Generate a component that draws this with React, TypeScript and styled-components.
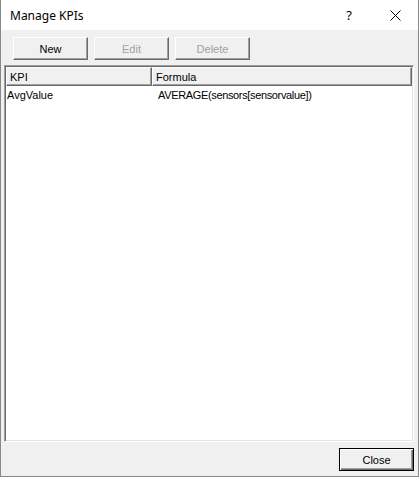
import React from "react";
import styled, { createGlobalStyle } from "styled-components";

const Global = createGlobalStyle`
  html, body { margin: 0; padding: 0; background: #ffffff; }
  * { box-sizing: border-box; }
`;

const Window = styled.div`
  width: 419px;
  height: 477px;
  display: flex;
  flex-direction: column;
  background: #f0f0f0;
  border-left: 1px solid #888888;
  border-right: 1px solid #888888;
  border-bottom: 1px solid #888888;
  font-family: "Liberation Sans", Arial, sans-serif;
  font-size: 11px;
  color: #000;
`;

const TitleBar = styled.div`
  height: 30px;
  flex: none;
  background: #ffffff;
  display: flex;
  align-items: center;
`;

const Title = styled.div`
  flex: 1;
  padding-left: 9px;
  padding-top: 1px;
  font-family: "Noto Sans", "Segoe UI", sans-serif;
  font-size: 12px;
  color: #000;
`;

const TitleButton = styled.div<{ $w: number }>`
  width: ${(p) => p.$w}px;
  height: 30px;
  display: flex;
  align-items: center;
  justify-content: center;
  font-family: "Noto Sans", sans-serif;
  font-size: 13px;
`;

const Body = styled.div`
  flex: 1;
  display: flex;
  flex-direction: column;
  padding: 7px 4px 3px 2px;
`;

const Toolbar = styled.div`
  display: flex;
  gap: 6px;
  padding-left: 10px;
  height: 23px;
  margin-bottom: 5px;
`;

const Button = styled.button<{ $disabled?: boolean; $default?: boolean }>`
  width: 75px;
  height: 23px;
  padding: 0;
  margin: 0;
  background: #f0f0f0;
  font-family: "Liberation Sans", Arial, sans-serif;
  font-size: 11px;
  color: ${(p) => (p.$disabled ? "#a0a0a0" : "#000")};
  border-top: 1px solid ${(p) => (p.$default ? "#000" : "#ffffff")};
  border-left: 1px solid ${(p) => (p.$default ? "#000" : "#ffffff")};
  border-right: 1px solid ${(p) => (p.$default ? "#000" : "#696969")};
  border-bottom: 1px solid ${(p) => (p.$default ? "#000" : "#696969")};
  box-shadow: ${(p) =>
    p.$default
      ? "inset 1px 1px 0 #ffffff, inset -1px -1px 0 #696969, inset -2px -2px 0 #a0a0a0"
      : "inset -1px -1px 0 #a0a0a0"};
  display: flex;
  align-items: center;
  justify-content: center;
`;

const ListView = styled.div`
  flex: 1;
  margin-left: 1px;
  display: flex;
  flex-direction: column;
  background: #ffffff;
  border-top: 1px solid #a0a0a0;
  border-left: 1px solid #a0a0a0;
  border-right: 1px solid #ffffff;
  border-bottom: 1px solid #ffffff;
  box-shadow: inset 1px 1px 0 #696969, inset -1px -1px 0 #e3e3e3;
  padding: 1px;
`;

const HeaderRow = styled.div`
  display: grid;
  grid-template-columns: 146px 1fr;
  height: 19px;
`;

const HeaderCell = styled.div`
  background: #f0f0f0;
  border-top: 1px solid #ffffff;
  border-left: 1px solid #ffffff;
  border-right: 1px solid #696969;
  border-bottom: 1px solid #696969;
  box-shadow: inset -1px -1px 0 #a0a0a0;
  padding-left: 3px;
  display: flex;
  align-items: center;
  padding-top: 1px;
`;

const Row = styled.div`
  display: grid;
  grid-template-columns: 146px 1fr;
  height: 17px;
  align-items: center;
`;

const Cell = styled.div<{ $pad: number; $tight?: boolean }>`
  padding-left: ${(p) => p.$pad}px;
  white-space: nowrap;
  letter-spacing: ${(p) => (p.$tight ? "-0.35px" : "0")};
`;

const Footer = styled.div`
  height: 31px;
  flex: none;
  display: flex;
  justify-content: flex-end;
  align-items: flex-start;
  padding-top: 6px;
  padding-right: 0;
`;

const CloseIcon = () => (
  <svg width="11" height="11" viewBox="0 0 11 11">
    <path d="M0.5 0.5 L10.5 10.5 M10.5 0.5 L0.5 10.5" stroke="#000" strokeWidth="1" fill="none" />
  </svg>
);

export default function App() {
  return (
    <>
      <Global />
      <Window>
        <TitleBar>
          <Title>Manage KPIs</Title>
          <TitleButton $w={46}>?</TitleButton>
          <TitleButton $w={46}>
            <CloseIcon />
          </TitleButton>
        </TitleBar>
        <Body>
          <Toolbar>
            <Button>New</Button>
            <Button $disabled>Edit</Button>
            <Button $disabled>Delete</Button>
          </Toolbar>
          <ListView>
            <HeaderRow>
              <HeaderCell>KPI</HeaderCell>
              <HeaderCell>Formula</HeaderCell>
            </HeaderRow>
            <Row>
              <Cell $pad={1}>AvgValue</Cell>
              <Cell $pad={6} $tight>AVERAGE(sensors[sensorvalue])</Cell>
            </Row>
          </ListView>
          <Footer>
            <Button $default>Close</Button>
          </Footer>
        </Body>
      </Window>
    </>
  );
}
